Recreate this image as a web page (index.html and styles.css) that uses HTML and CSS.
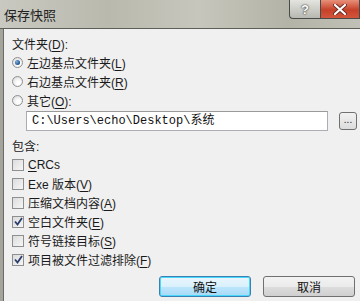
FILE: index.html
```html
<!DOCTYPE html>
<html lang="zh">
<head>
    <meta charset="UTF-8">
    <title>保存快照</title>
    <link rel="stylesheet" href="styles.css">
</head>
<body>
    <div class="window">
        <div class="titlebar">
            <span class="title">保存快照</span>
            <div class="caption-buttons">
                <span class="cap-btn help">?</span>
                <span class="cap-btn close">
                    <svg width="14" height="11" viewBox="0 0 14 11">
                        <path d="M2 1 L12 10 M12 1 L2 10" stroke="#6a2a20" stroke-width="4" stroke-linecap="round"/>
                        <path d="M2 1 L12 10 M12 1 L2 10" stroke="#fff" stroke-width="2.2" stroke-linecap="round"/>
                    </svg>
                </span>
            </div>
        </div>

        <div class="content">
            <div class="group-label">文件夹(<u>D</u>):</div>

            <label class="option">
                <span class="radio checked"></span>
                <span>左边基点文件夹(<u>L</u>)</span>
            </label>
            <label class="option">
                <span class="radio"></span>
                <span>右边基点文件夹(<u>R</u>)</span>
            </label>
            <label class="option">
                <span class="radio"></span>
                <span>其它(<u>O</u>):</span>
            </label>

            <div class="path-row">
                <div class="path-input">C:\Users\echo\Desktop\系统</div>
                <span class="browse">...</span>
            </div>

            <div class="group-label include">包含:</div>

            <label class="option">
                <span class="check"></span>
                <span><u>C</u>RCs</span>
            </label>
            <label class="option">
                <span class="check"></span>
                <span>Exe 版本(<u>V</u>)</span>
            </label>
            <label class="option">
                <span class="check"></span>
                <span>压缩文档内容(<u>A</u>)</span>
            </label>
            <label class="option">
                <span class="check checked">
                    <svg width="9" height="9" viewBox="0 0 9 9"><path d="M1 4.5 L3.5 7.5 L8 1" fill="none" stroke="#2a3f6e" stroke-width="1.8"/></svg>
                </span>
                <span>空白文件夹(<u>E</u>)</span>
            </label>
            <label class="option">
                <span class="check"></span>
                <span>符号链接目标(<u>S</u>)</span>
            </label>
            <label class="option">
                <span class="check checked">
                    <svg width="9" height="9" viewBox="0 0 9 9"><path d="M1 4.5 L3.5 7.5 L8 1" fill="none" stroke="#2a3f6e" stroke-width="1.8"/></svg>
                </span>
                <span>项目被文件过滤排除(<u>F</u>)</span>
            </label>

            <div class="actions">
                <button class="btn default">确定</button>
                <button class="btn">取消</button>
            </div>
        </div>
    </div>
</body>
</html>
```

FILE: styles.css
```css
body {
    margin: 0;
    padding: 0;
    font-family: "Liberation Sans", "Noto Sans CJK SC", sans-serif;
    font-size: 12px;
    color: #1a1a1a;
    background-color: #f0f0f0;
}
.window {
    width: 360px;
    height: 301px;
    overflow: hidden;
    display: flex;
    flex-direction: column;
}
.titlebar {
    height: 28px;
    flex: none;
    display: flex;
    justify-content: space-between;
    background: linear-gradient(90deg, #c9c9c1 0%, #b9b9ae 30%, #c6c6bc 55%, #b3b3a7 80%, #c0c0b6 100%);
    border-bottom: 1px solid #5f5f5a;
}
.title {
    padding: 5px 0 0 4px;
    font-size: 13px;
    color: #222;
}
.caption-buttons {
    display: flex;
    height: 19px;
}
.cap-btn {
    display: flex;
    align-items: center;
    justify-content: center;
    box-sizing: border-box;
    height: 19px;
    border: 1px solid #4a4a48;
    border-top: none;
}
.help {
    width: 31px;
    background: linear-gradient(#e4e4e0, #b8b8b2);
    border-radius: 0 0 0 4px;
    font-weight: bold;
    font-size: 13px;
    color: #fff;
    text-shadow: 0 0 2px #333, 0 0 1px #333;
    border-right: none;
}
.close {
    width: 40px;
    background: linear-gradient(#e8907a, #c7412a 55%, #d2563c);
}
.content {
    flex: 1;
    border-left: 3px solid #a4a49c;
    box-shadow: inset 1px 0 0 #6a6a66;
    padding: 8px 0 0 9px;
}
.group-label {
    height: 16px;
    line-height: 16px;
}
.include {
    margin-top: 8px;
}
.option {
    display: flex;
    align-items: center;
    gap: 4px;
    height: 19px;
}
u {
    text-decoration-thickness: 1px;
    text-underline-offset: 2px;
}
.radio {
    width: 11px;
    height: 11px;
    box-sizing: border-box;
    border-radius: 50%;
    border: 1px solid #8e8f8f;
    background: radial-gradient(circle at 60% 65%, #ffffff 20%, #d8d8d8 90%);
    display: flex;
    align-items: center;
    justify-content: center;
}
.radio.checked::after {
    content: "";
    width: 5px;
    height: 5px;
    border-radius: 50%;
    background: radial-gradient(circle at 35% 35%, #7fb0e0, #1c4f8a 70%);
}
.check {
    width: 12px;
    height: 12px;
    box-sizing: border-box;
    border: 1px solid #8e8f8f;
    background: linear-gradient(135deg, #dcdcdc, #f6f6f6);
    display: flex;
    align-items: center;
    justify-content: center;
}
.path-row {
    display: flex;
    align-items: center;
    margin: 1px 0 0 14px;
}
.path-input {
    width: 302px;
    height: 20px;
    box-sizing: border-box;
    border: 1px solid #abadb3;
    border-top-color: #9a9a9a;
    background-color: #fff;
    font-family: "Liberation Mono", "Noto Sans CJK SC", monospace;
    font-size: 12px;
    line-height: 18px;
    padding-left: 5px;
    color: #111;
}
.browse {
    margin-left: 11px;
    width: 18px;
    height: 18px;
    box-sizing: border-box;
    border: 1px solid #707070;
    border-radius: 3px;
    background: linear-gradient(#f2f2f2, #dcdcdc);
    font-size: 10px;
    line-height: 14px;
    text-align: center;
    color: #222;
}
.actions {
    display: flex;
    justify-content: flex-end;
    gap: 12px;
    margin-top: 7px;
    padding-right: 5px;
}
.btn {
    width: 92px;
    height: 21px;
    box-sizing: border-box;
    border: 1px solid #707070;
    border-radius: 3px;
    background: linear-gradient(#f2f2f2 0%, #ebebeb 50%, #dddddd 51%, #cfcfcf 100%);
    font-family: "Liberation Sans", "Noto Sans CJK SC", sans-serif;
    font-size: 12px;
    padding: 0;
    color: #111;
}
.btn.default {
    border-color: #3c7fb1;
    box-shadow: inset 0 0 0 1px #48d8fb;
    background: linear-gradient(#eaf6fd 0%, #d9f0fc 50%, #bee6fd 51%, #a7d9f5 100%);
}
```
